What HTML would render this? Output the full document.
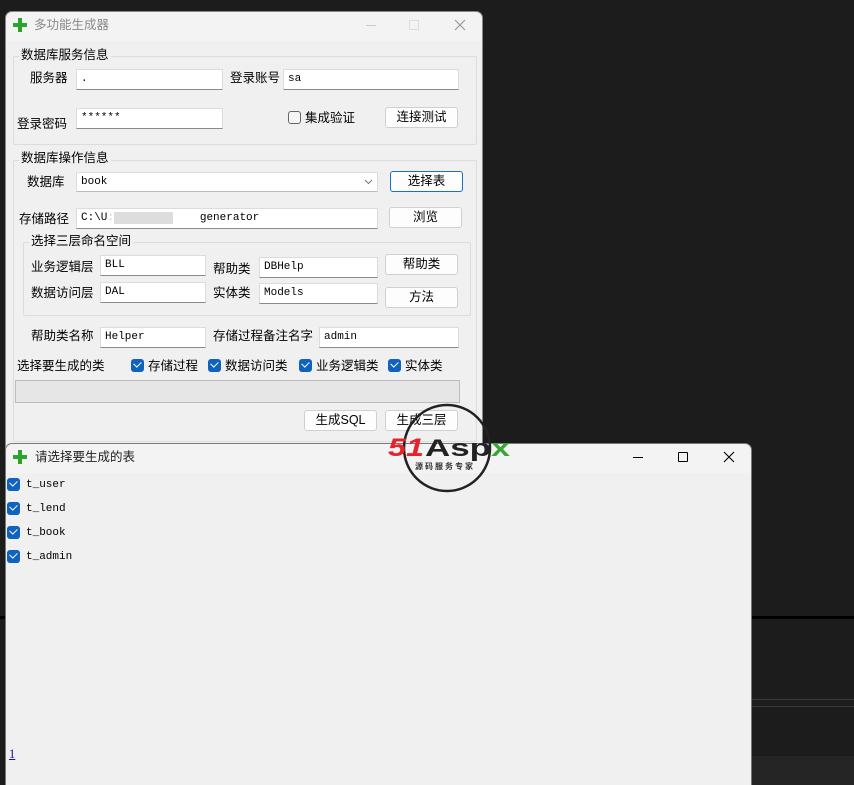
<!DOCTYPE html>
<html><head><meta charset="utf-8"><style>
*{margin:0;padding:0;box-sizing:border-box}
body{width:854px;height:785px;background:#1c1c1c;position:relative;overflow:hidden;font-family:"Liberation Sans","Noto Sans CJK SC",sans-serif;font-size:12px;color:#000}
.a{position:absolute}
.t{position:absolute;font-size:12.5px;line-height:14px;white-space:nowrap}
.tb{position:absolute;background:#fff;border:1px solid #dcdcdc;border-bottom:1px solid #8a8a8a;font-family:"Liberation Mono","Noto Sans CJK SC",monospace;font-size:11px;line-height:19px;padding-left:4px;white-space:nowrap}
.lt{position:absolute;font-family:"Liberation Mono",monospace;font-size:11px;line-height:14px}
.btn{position:absolute;background:#fdfdfd;border:1px solid #d0d0d0;border-radius:3px;text-align:center;font-size:12.5px;line-height:19px}
.gb{position:absolute;border:1px solid #dcdcdc;border-radius:2px}
.gl{position:absolute;background:#f0f0f0;padding:0 2px;font-size:12.5px;line-height:14px}
.cb{position:absolute;width:13px;height:13px;background:#0f62bd;border-radius:3px}
.cb:after{content:"";position:absolute;left:3px;top:2px;width:6px;height:4px;border-left:1.5px solid #fff;border-bottom:1.5px solid #fff;transform:rotate(-45deg)}
</style></head><body>
<div class="a" style="left:752px;top:616px;width:102px;height:3px;background:#000"></div>
<div class="a" style="left:0;top:616px;width:5px;height:3px;background:#000"></div>
<div class="a" style="left:752px;top:699px;width:102px;height:1px;background:#3a3a3a"></div>
<div class="a" style="left:752px;top:706px;width:102px;height:1px;background:#3a3a3a"></div>
<div class="a" style="left:752px;top:756px;width:102px;height:29px;background:#252525"></div>

<div class="a" style="left:5px;top:11px;width:478px;height:440px;background:#f0f0f0;border-radius:7px 7px 0 0;border:1px solid #888"></div>
<div class="a" style="left:6px;top:12px;width:476px;height:29px;background:#f3f3f3;border-radius:7px 7px 0 0"></div>
<svg class="a" style="left:12px;top:17px" width="16" height="16"><path d="M6 1h4v5h5v4h-5v5h-4v-5h-5v-4h5z" fill="#2aa52a"/></svg>
<div class="t" style="left:34px;top:18px;color:#8a8a8a">多功能生成器</div>
<div class="a" style="left:366px;top:25px;width:10px;height:1px;background:#ccc"></div>
<div class="a" style="left:409px;top:20px;width:10px;height:10px;border:1px solid #ddd"></div>
<svg class="a" style="left:454px;top:19px" width="12" height="12"><path d="M1 1L11 11M11 1L1 11" stroke="#999" stroke-width="1.2"/></svg>

<div class="gb" style="left:13px;top:56px;width:464px;height:89px"></div>
<div class="gl" style="left:19px;top:48px">数据库服务信息</div>
<div class="t" style="left:30px;top:71px">服务器</div>
<div class="tb" style="left:76px;top:69px;width:147px;height:21px">.</div>
<div class="t" style="left:230px;top:71px">登录账号</div>
<div class="tb" style="left:283px;top:69px;width:176px;height:21px">sa</div>
<div class="t" style="left:17px;top:117px">登录密码</div>
<div class="tb" style="left:76px;top:108px;width:147px;height:21px">******</div>
<div class="a" style="left:288px;top:111px;width:13px;height:13px;border:1px solid #666;border-radius:3px;background:#f5f5f5"></div>
<div class="t" style="left:305px;top:111px">集成验证</div>
<div class="btn" style="left:385px;top:107px;width:73px;height:21px">连接测试</div>

<div class="gb" style="left:13px;top:160px;width:464px;height:282px"></div>
<div class="gl" style="left:19px;top:151px">数据库操作信息</div>
<div class="t" style="left:27px;top:175px">数据库</div>
<div class="tb" style="left:76px;top:172px;width:302px;height:20px;border-bottom-color:#bbb;line-height:18px">book</div>
<svg class="a" style="left:364px;top:179px" width="9" height="6"><path d="M1 1l3.5 3.5L8 1" stroke="#777" fill="none"/></svg>
<div class="btn" style="left:390px;top:171px;width:73px;height:21px;border-color:#1a6fc9">选择表</div>
<div class="t" style="left:19px;top:212px">存储路径</div>
<div class="tb" style="left:76px;top:208px;width:302px;height:21px">C:\U<span style="color:#ccc">:</span><span style="background:#ddd;color:#ddd">xxxxxxxxx</span><span style="color:#fff">xxxx</span>generator</div>
<div class="btn" style="left:389px;top:207px;width:73px;height:21px">浏览</div>

<div class="gb" style="left:23px;top:242px;width:448px;height:74px"></div>
<div class="gl" style="left:29px;top:234px">选择三层命名空间</div>
<div class="t" style="left:31px;top:260px">业务逻辑层</div>
<div class="tb" style="left:100px;top:255px;width:106px;height:21px">BLL</div>
<div class="t" style="left:213px;top:262px">帮助类</div>
<div class="tb" style="left:259px;top:257px;width:119px;height:21px">DBHelp</div>
<div class="btn" style="left:385px;top:254px;width:73px;height:21px">帮助类</div>
<div class="t" style="left:31px;top:286px">数据访问层</div>
<div class="tb" style="left:100px;top:282px;width:106px;height:21px">DAL</div>
<div class="t" style="left:213px;top:286px">实体类</div>
<div class="tb" style="left:259px;top:283px;width:119px;height:21px">Models</div>
<div class="btn" style="left:385px;top:287px;width:73px;height:21px">方法</div>

<div class="t" style="left:31px;top:329px">帮助类名称</div>
<div class="tb" style="left:100px;top:327px;width:106px;height:21px">Helper</div>
<div class="t" style="left:213px;top:329px">存储过程备注名字</div>
<div class="tb" style="left:319px;top:327px;width:140px;height:21px">admin</div>

<div class="t" style="left:17px;top:359px">选择要生成的类</div>
<div class="cb" style="left:131px;top:359px"></div><div class="t" style="left:148px;top:359px">存储过程</div>
<div class="cb" style="left:208px;top:359px"></div><div class="t" style="left:225px;top:359px">数据访问类</div>
<div class="cb" style="left:299px;top:359px"></div><div class="t" style="left:316px;top:359px">业务逻辑类</div>
<div class="cb" style="left:388px;top:359px"></div><div class="t" style="left:405px;top:359px">实体类</div>
<div class="a" style="left:15px;top:380px;width:445px;height:23px;background:#e6e6e6;border:1px solid #bcbcbc"></div>
<div class="btn" style="left:304px;top:410px;width:73px;height:21px">生成SQL</div>
<div class="btn" style="left:385px;top:410px;width:73px;height:21px">生成三层</div>

<div class="a" style="left:5px;top:443px;width:747px;height:342px;background:#f0f0f0;border-radius:7px 7px 0 0;border:1px solid #777;border-bottom:none"></div>
<div class="a" style="left:6px;top:444px;width:745px;height:29px;background:#f3f3f3;border-radius:7px 7px 0 0"></div>
<svg class="a" style="left:12px;top:449px" width="16" height="16"><path d="M6 1h4v5h5v4h-5v5h-4v-5h-5v-4h5z" fill="#2aa52a"/></svg>
<div class="t" style="left:35px;top:450px;color:#222">请选择要生成的表</div>
<div class="a" style="left:633px;top:457px;width:10px;height:1px;background:#000"></div>
<div class="a" style="left:678px;top:452px;width:10px;height:10px;border:1px solid #000;border-radius:1px"></div>
<svg class="a" style="left:723px;top:451px" width="12" height="12"><path d="M1 1L11 11M11 1L1 11" stroke="#000" stroke-width="1.1"/></svg>

<div class="cb" style="left:7px;top:478px"></div><div class="lt" style="left:26px;top:478px">t_user</div>
<div class="cb" style="left:7px;top:502px"></div><div class="lt" style="left:26px;top:502px">t_lend</div>
<div class="cb" style="left:7px;top:526px"></div><div class="lt" style="left:26px;top:526px">t_book</div>
<div class="cb" style="left:7px;top:550px"></div><div class="lt" style="left:26px;top:550px">t_admin</div>
<div class="t" style="left:9px;top:747px;color:#1a0dab;text-decoration:underline;font-family:'Liberation Serif',serif">1</div>

<svg class="a" style="left:384px;top:400px" width="130" height="96">
<circle cx="63" cy="48" r="43" fill="none" stroke="#222" stroke-width="2.5"/>
<text x="4" y="56" font-family="Liberation Sans" font-weight="bold" font-style="italic" font-size="25" fill="#e8222a" textLength="36" lengthAdjust="spacingAndGlyphs">51</text>
<text x="41" y="56" font-family="Liberation Sans" font-weight="bold" font-size="24" fill="#222" textLength="66" lengthAdjust="spacingAndGlyphs">Asp</text>
<text x="107" y="56" font-family="Liberation Sans" font-weight="bold" font-size="24" fill="#3aa63a" textLength="19" lengthAdjust="spacingAndGlyphs">x</text>
<text x="31" y="69" font-family="Noto Sans CJK SC" font-weight="bold" font-size="8" fill="#333" letter-spacing="2">源码服务专家</text>
</svg>
</body></html>
